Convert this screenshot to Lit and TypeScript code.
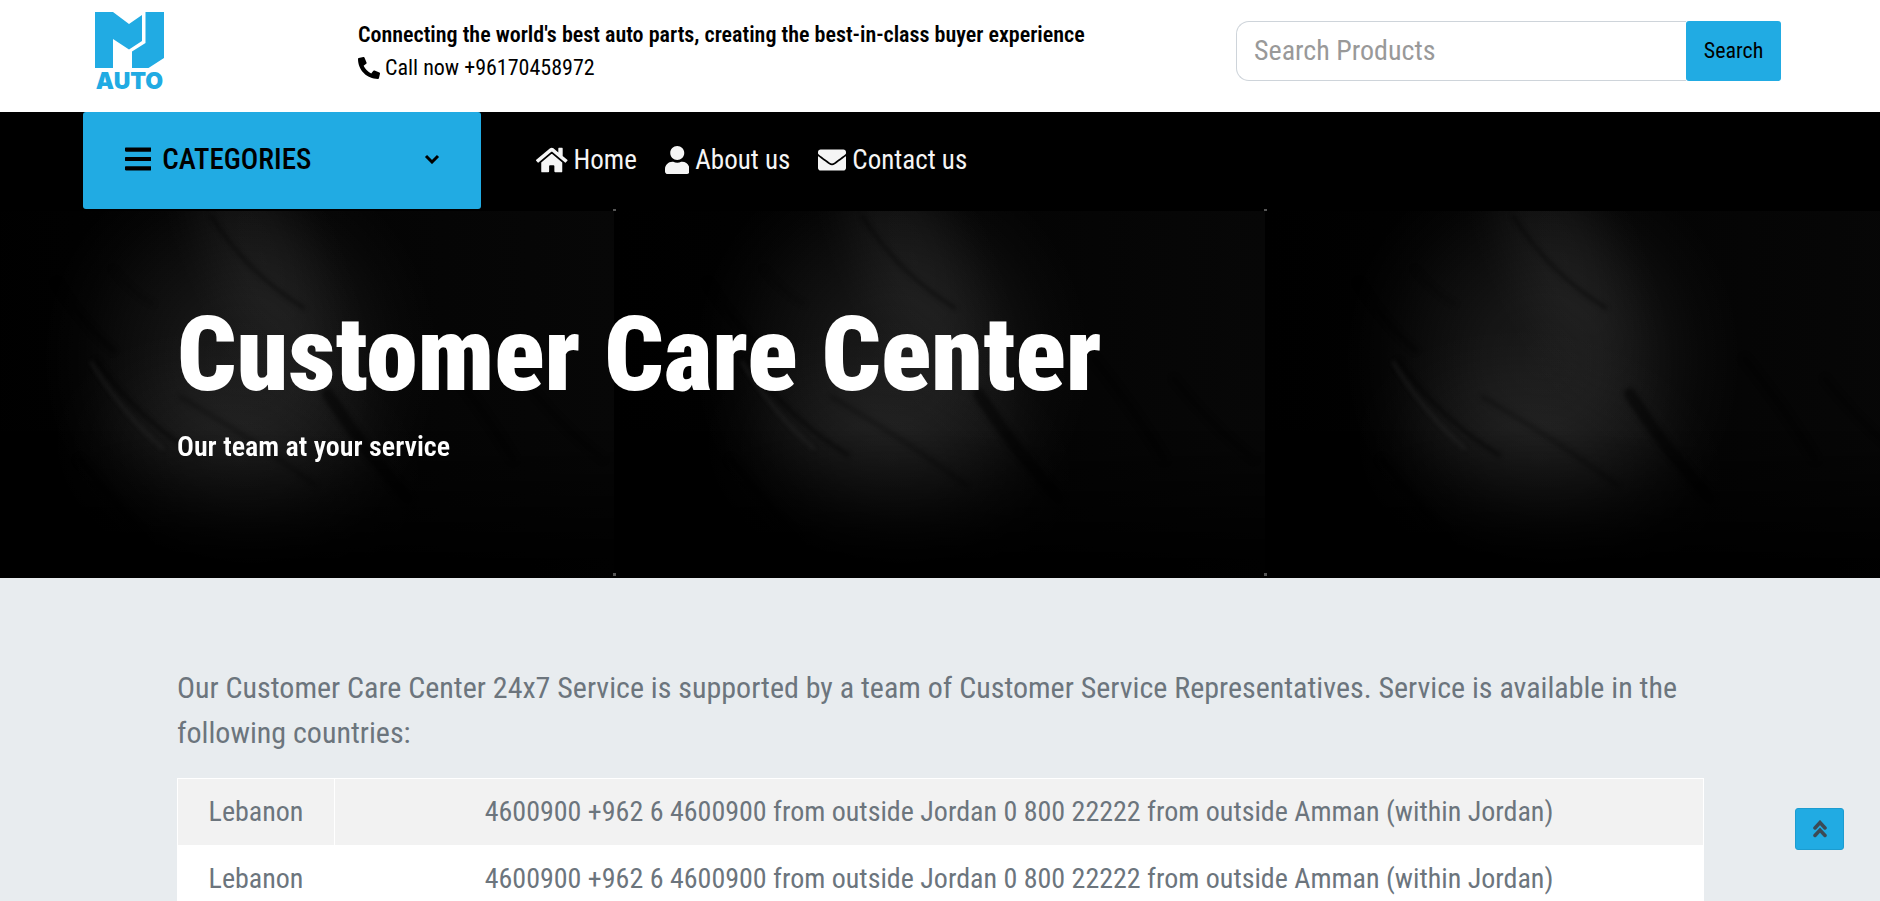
import { LitElement, html, svg, css } from "lit";
import { customElement } from "lit/decorators.js";

const ICONS = {
  phone: { w: 512, d: "M497.39 361.8l-112-48a24 24 0 0 0-28 6.9l-49.6 60.6A370.66 370.66 0 0 1 130.6 204.11l60.6-49.6a23.94 23.94 0 0 0 6.9-28l-48-112A24.16 24.16 0 0 0 122.6.61l-104 24A24 24 0 0 0 0 48c0 256.5 207.9 464 464 464a24 24 0 0 0 23.4-18.6l24-104a24.29 24.29 0 0 0-14.01-27.6z" },
  bars: { w: 448, d: "M16 132h416c8.8 0 16-7.2 16-16V76c0-8.8-7.2-16-16-16H16C7.2 60 0 67.2 0 76v40c0 8.8 7.2 16 16 16zm0 160h416c8.8 0 16-7.2 16-16v-40c0-8.8-7.2-16-16-16H16c-8.8 0-16 7.2-16 16v40c0 8.8 7.2 16 16 16zm0 160h416c8.8 0 16-7.2 16-16v-40c0-8.8-7.2-16-16-16H16c-8.8 0-16 7.2-16 16v40c0 8.8 7.2 16 16 16z" },
  home: { w: 576, d: "M280.37 148.26L96 300.11V464a16 16 0 0 0 16 16l112.06-.29a16 16 0 0 0 15.92-16V368a16 16 0 0 1 16-16h64a16 16 0 0 1 16 16v95.64a16 16 0 0 0 16 16.05L464 480a16 16 0 0 0 16-16V300L295.67 148.26a12.19 12.19 0 0 0-15.3 0zM571.6 251.47L488 182.56V44.05a12 12 0 0 0-12-12h-56a12 12 0 0 0-12 12v72.61L318.47 43a48 48 0 0 0-61 0L4.34 251.47a12 12 0 0 0-1.6 16.9l25.5 31A12 12 0 0 0 45.15 301l235.22-193.74a12.19 12.19 0 0 1 15.3 0L530.9 301a12 12 0 0 0 16.9-1.6l25.5-31a12 12 0 0 0-1.7-16.93z" },
  user: { w: 448, d: "M224 256c70.7 0 128-57.3 128-128S294.7 0 224 0 96 57.3 96 128s57.3 128 128 128zm89.6 32h-16.7c-22.2 10.2-46.9 16-72.9 16s-50.6-5.8-72.9-16h-16.7C60.2 288 0 348.2 0 422.4V464c0 26.5 21.5 48 48 48h352c26.5 0 48-21.5 48-48v-41.6c0-74.2-60.2-134.4-134.4-134.4z" },
  envelope: { w: 512, d: "M502.3 190.8c3.9-3.1 9.7-.2 9.7 4.7V400c0 26.5-21.5 48-48 48H48c-26.5 0-48-21.5-48-48V195.6c0-5 5.7-7.8 9.7-4.7 22.4 17.4 52.1 39.5 154.1 113.6 21.1 15.4 56.7 47.8 92.2 47.6 35.7.3 72-32.8 92.3-47.6 102-74.1 131.6-96.3 154-113.7zM256 320c23.2.4 56.6-29.2 73.4-41.4 132.7-96.3 142.8-104.7 173.4-128.7 5.8-4.5 9.2-11.5 9.2-18.9v-19c0-26.5-21.5-48-48-48H48c-26.5 0-48 21.5-48 48v19c0 7.4 3.4 14.3 9.2 18.9 30.6 23.9 40.7 32.4 173.4 128.7 16.8 12.2 50.2 41.8 73.4 41.4z" },
};

const icon = (name: keyof typeof ICONS, cls: string) => html`
  <svg class=${cls} viewBox="0 0 ${ICONS[name].w} 512" aria-hidden="true"><path fill="currentColor" d=${ICONS[name].d}></path></svg>`;

const NAV: { label: string; icon: keyof typeof ICONS }[] = [
  { label: "Home", icon: "home" },
  { label: "About us", icon: "user" },
  { label: "Contact us", icon: "envelope" },
];

const LINES = "4600900 +962 6 4600900 from outside Jordan 0 800 22222 from outside Amman (within Jordan)";
const COUNTRIES = [
  { name: "Lebanon", phones: LINES },
  { name: "Lebanon", phones: LINES },
];

// Scratches of the slate texture, in tile coordinates.
const SCRATCHES = [
  { d: "M248 7 Q285 65 341 99", w: 3, c: "#000", o: 0.5 },
  { d: "M133 151 Q175 210 234 246", w: 3, c: "#000", o: 0.6 },
  { d: "M128 153 Q160 205 200 240", w: 2, c: "#444", o: 0.4 },
  { d: "M94 74 Q120 115 150 141", w: 6, c: "#000", o: 0.4 },
  { d: "M218 188 Q290 230 352 276", w: 5, c: "#000", o: 0.25 },
  { d: "M365 185 Q400 240 445 290", w: 12, c: "#000", o: 0.5 },
  { d: "M117 251 Q150 290 184 331", w: 8, c: "#000", o: 0.4 },
  { d: "M150 60 Q170 85 190 95", w: 4, c: "#000", o: 0.2 },
  { d: "M480 150 Q520 200 550 250", w: 8, c: "#000", o: 0.3 },
  { d: "M560 170 Q600 220 640 250", w: 6, c: "#000", o: 0.3 },
];

@customElement("app-root")
export class AppRoot extends LitElement {
  static styles = css`
    :host {
      display: block;
      min-height: 100vh;
      background: #e8ecef;
      color: #000;
      font-family: "Roboto Condensed", Roboto, "Liberation Sans", sans-serif;
      font-size: 28px;
      line-height: 34px;
    }
    * { box-sizing: border-box; }
    svg { display: block; flex: none; }
    a { color: inherit; text-decoration: none; }
    button, input { font: inherit; margin: 0; }
    h1, p { margin: 0; }

    .header {
      display: grid;
      grid-template-columns: 263px 1fr 545px;
      align-items: start;
      min-height: 112px;
      padding: 12px 99px 0 95px;
      background: #fff;
    }
    .logo { width: 70px; }
    .logo-text { font: 900 23px Inter, sans-serif; }
    .tagline { padding-top: 6px; font-size: 22px; line-height: 33px; }
    .slogan { font-weight: 600; }
    .call { display: flex; align-items: center; gap: 5px; }
    .icon-phone { height: 22px; }
    .search { display: flex; height: 60px; margin-top: 9px; }
    .search-box {
      flex: 1;
      min-width: 0;
      padding: 0 17px;
      border: 1px solid #ced4da;
      border-right: 0;
      border-radius: 13px 0 0 13px;
      background: #fff;
    }
    .search-box::placeholder { color: #999; opacity: 1; }
    .search-button {
      width: 95px;
      padding: 0;
      border: 0;
      border-radius: 3px;
      background: #21abe3;
      color: #000;
      font-size: 22px;
    }

    .navbar {
      display: flex;
      align-items: stretch;
      height: 97px;
      padding-left: 83px;
      background: #000;
    }
    .categories {
      display: flex;
      align-items: center;
      gap: 11px;
      width: 398px;
      padding: 0 41px 4px 42px;
      border: 0;
      border-radius: 3px;
      background: #21abe3;
      color: #000;
      font-size: 29px;
      font-weight: 500;
    }
    .icon-bars { height: 30px; }
    .chevron { width: 16px; margin-left: auto; }
    .links {
      display: flex;
      align-items: center;
      gap: 28px;
      margin: 0 0 0 55px;
      padding: 0 0 2px;
      list-style: none;
      color: #f5f5f5;
      font-size: 27px;
    }
    .link { display: flex; align-items: center; gap: 6px; }
    .icon-nav { height: 28px; }

    .hero {
      position: relative;
      display: flow-root;
      min-height: 369px;
      padding: 86px 177px 0;
      background: #020202;
      color: #fff;
    }
    .texture { position: absolute; inset: 0; width: 100%; height: 100%; }
    .hero-text { position: relative; }
    .title { font-size: 104px; line-height: 120px; font-weight: 900; }
    .subtitle { margin-top: 15px; font-weight: 600; }

    .content { padding: 87px 176px 0 177px; color: #6c757d; }
    .intro { font-size: 30px; line-height: 45px; }
    .table {
      width: 100%;
      margin-top: 23px;
      border-collapse: collapse;
      background: #fff;
      text-align: center;
    }
    .table th, .table td { height: 67px; padding: 0 16px; border: 1px solid #fff; font-weight: 400; }
    .table th { width: 157px; }
    .table tr:nth-child(odd) { background: #f2f2f2; }

    .to-top {
      position: fixed;
      right: 36px;
      bottom: 51px;
      display: grid;
      place-items: center;
      width: 49px;
      height: 42px;
      padding: 0;
      border: 1px solid #1c9cd0;
      border-radius: 3px;
      background: #21abe3;
      color: #3c4a55;
    }
    .chevrons { width: 16px; }
  `;

  private texture() {
    return html`
      <svg class="texture" viewBox="0 0 1880 369" preserveAspectRatio="xMidYMid slice" aria-hidden="true">
        <defs>
          <linearGradient id="base">
            <stop offset="0" stop-color="#000"></stop>
            <stop offset=".35" stop-color="#020202"></stop>
            <stop offset="1" stop-color="#070707"></stop>
          </linearGradient>
          <linearGradient id="fade" x2="0" y2="1">
            <stop offset=".6" stop-color="#000" stop-opacity="0"></stop>
            <stop offset=".95" stop-color="#000" stop-opacity=".85"></stop>
          </linearGradient>
          <radialGradient id="glow">
            <stop offset="0" stop-color="#fff" stop-opacity=".09"></stop>
            <stop offset=".3" stop-color="#fff" stop-opacity=".075"></stop>
            <stop offset=".6" stop-color="#fff" stop-opacity=".04"></stop>
            <stop offset=".8" stop-color="#fff" stop-opacity=".015"></stop>
            <stop offset="1" stop-color="#fff" stop-opacity="0"></stop>
          </radialGradient>
          <filter id="fine" x="-30%" y="-30%" width="160%" height="160%" color-interpolation-filters="sRGB"><feGaussianBlur stdDeviation="2"></feGaussianBlur></filter>
          <g id="tile">
            <rect width="651" height="369" fill="url(#base)"></rect>
            <g fill="url(#glow)">
              <ellipse cx="278" cy="150" rx="200" ry="210"></ellipse>
              <ellipse cx="300" cy="50" rx="80" ry="210" opacity=".5" transform="rotate(-24 300 50)"></ellipse>
              <ellipse cx="275" cy="250" rx="190" ry="130" opacity=".6" transform="rotate(10 275 250)"></ellipse>
            </g>
            <g fill="none" stroke-linecap="round" filter="url(#fine)">
              ${SCRATCHES.map((s) => svg`<path d=${s.d} stroke=${s.c} stroke-width=${s.w} opacity=${s.o}></path>`)}
            </g>
            <rect width="651" height="369" fill="url(#fade)"></rect>
            <path d="M0 0H651V2H0z" fill="#000"></path>
            <path d="M-1 0h3v2h-3zM-1 364h3v3h-3z" fill="#555"></path>
          </g>
        </defs>
        <use href="#tile" x="-37"></use>
        <use href="#tile" x="614"></use>
        <use href="#tile" x="1265"></use>
      </svg>`;
  }

  render() {
    return html`
      <header class="header">
        <a href="#" aria-label="NJ Auto">
          <svg class="logo" viewBox="0 0 70 90" fill="#21abe3">
            <path d="M0 0H18L34 12 47 3V29L34 37.500 18 27V56H0z"></path>
            <path d="M50.500 0H69V46L53.500 56H37V39.500L50.500 31z"></path>
            <text class="logo-text" x="34.500" y="77" text-anchor="middle">AUTO</text>
          </svg>
        </a>
        <div class="tagline">
          <p class="slogan">Connecting the world's best auto parts, creating the best-in-class buyer experience</p>
          <a class="call" href="tel:+96170458972">${icon("phone", "icon-phone")}Call now +96170458972</a>
        </div>
        <form class="search" @submit=${(e: Event) => e.preventDefault()}>
          <input class="search-box" type="text" placeholder="Search Products" aria-label="Search Products" />
          <button class="search-button" type="submit">Search</button>
        </form>
      </header>
      <nav class="navbar">
        <button class="categories" type="button">
          ${icon("bars", "icon-bars")}CATEGORIES
          <svg class="chevron" viewBox="0 0 16 10" fill="none" stroke="currentColor" stroke-width="3"><path d="M2 2l6 6 6-6"></path></svg>
        </button>
        <ul class="links">
          ${NAV.map((n) => html`<li><a class="link" href="#">${icon(n.icon, "icon-nav")}${n.label}</a></li>`)}
        </ul>
      </nav>
      <section class="hero">
        ${this.texture()}
        <div class="hero-text">
          <h1 class="title">Customer Care Center</h1>
          <p class="subtitle">Our team at your service</p>
        </div>
      </section>
      <main class="content">
        <p class="intro">
          Our Customer Care Center 24x7 Service is supported by a team of Customer Service Representatives. Service is
          available in the following countries:
        </p>
        <table class="table">
          <tbody>
            ${COUNTRIES.map((c) => html`<tr><th scope="row">${c.name}</th><td>${c.phones}</td></tr>`)}
          </tbody>
        </table>
      </main>
      <button class="to-top" type="button" aria-label="Back to top">
        <svg class="chevrons" viewBox="0 0 16 18" fill="none" stroke="currentColor" stroke-width="3.500" stroke-linecap="round"><path d="M3 8l5-5.500 5 5.500M3 15.500l5-5.500 5 5.500"></path></svg>
      </button>
    `;
  }
}
